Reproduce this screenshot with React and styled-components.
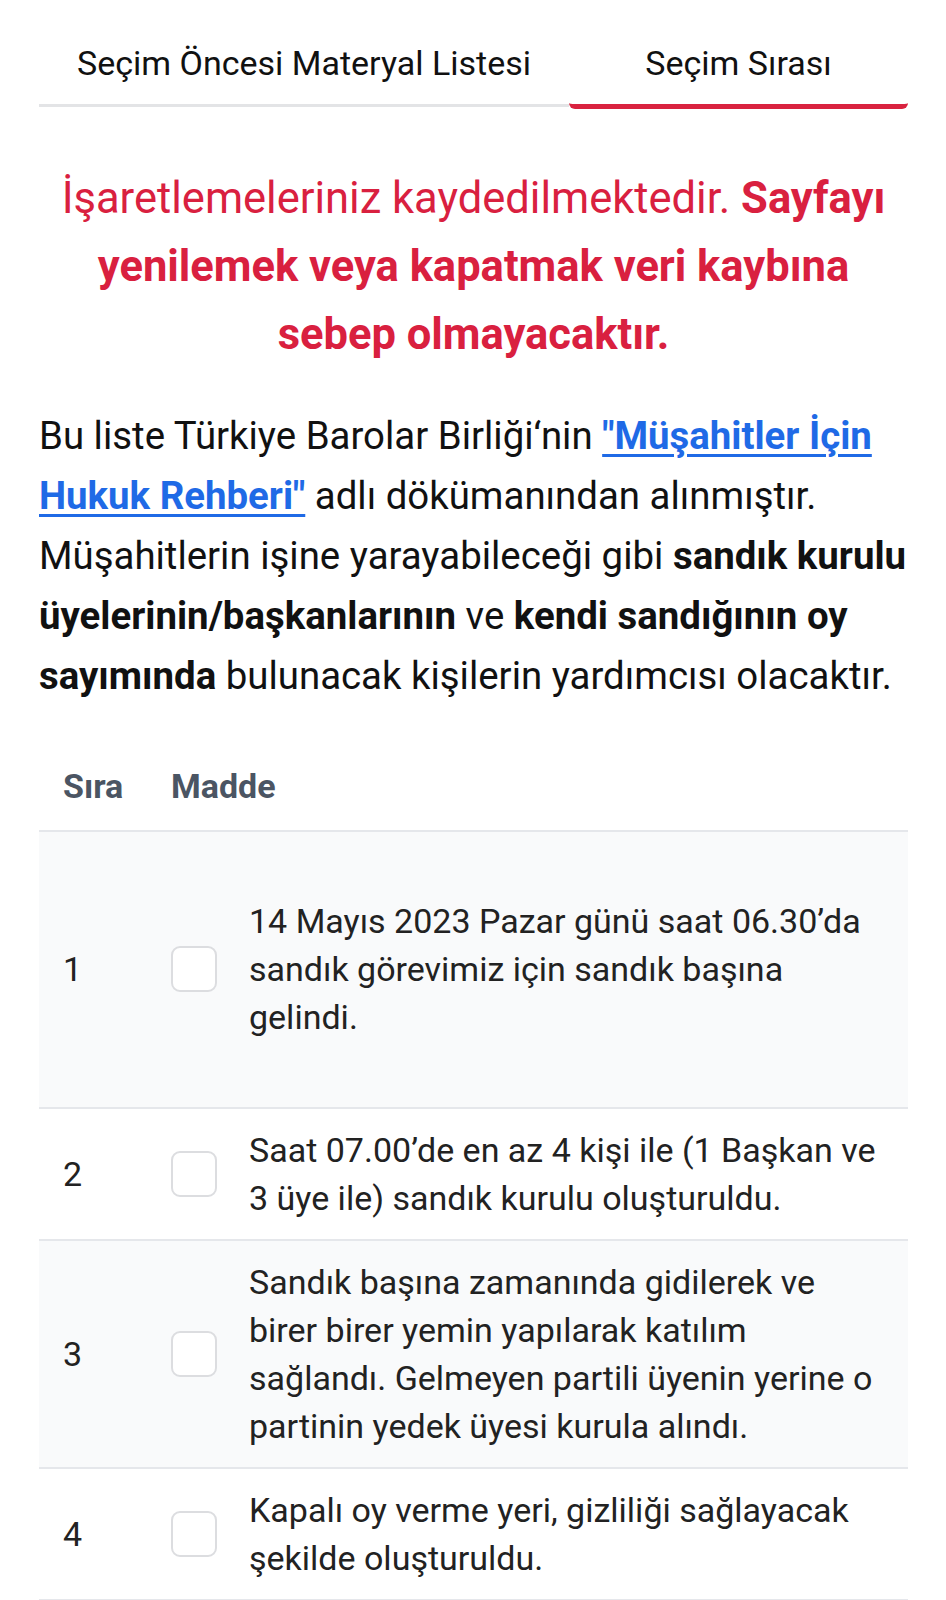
import styled, { createGlobalStyle } from 'styled-components';

const GlobalStyle = createGlobalStyle`
  body {
    margin: 0;
    background: #ffffff;
    font-family: Roboto, "Liberation Sans", sans-serif;
    color: #111111;
  }
`

const Page = styled.div`
  padding: 0 38px 0 39px;
`

const Tabs = styled.div`
  display: grid;
  grid-template-columns: 530px 1fr;
  padding-top: 39px;
`

const Tab = styled.div`
  text-align: center;
  font-size: 34px;
  line-height: 48px;
  padding-bottom: 17px;
  color: #111111;
  border-bottom: ${p => (p.active ? '5px solid #d9223f' : '3px solid #e3e4e6')};
  border-radius: ${p => (p.active ? '0 0 6px 6px' : '0')};
  margin-bottom: ${p => (p.active ? '-2px' : '0')};
`

const Alert = styled.p`
  margin: 58px 0 0;
  text-align: center;
  color: #d9203f;
  font-size: 43.5px;
  line-height: 68px;

  strong {
    font-weight: 700;
  }
`

const Intro = styled.p`
  margin: 37px -10px 0 0;
  font-size: 38.4px;
  line-height: 60px;
  color: #111111;

  a {
    color: #1f6ae6;
    font-weight: 700;
    text-decoration: underline;
    text-decoration-thickness: 3px;
    text-underline-offset: 5px;
  }
`

const Table = styled.div`
  margin-top: 40px;
`

const HeadRow = styled.div`
  display: grid;
  grid-template-columns: 108px 1fr;
  padding: 16px 24px 20px;
  border-bottom: 2px solid #e5e7eb;
  font-size: 34px;
  line-height: 48px;
  font-weight: 700;
  color: #4b5563;
`

const Row = styled.div`
  display: grid;
  grid-template-columns: 108px 46px 1fr;
  align-items: center;
  padding: ${p => (p.tall ? '65px' : '17px')} 24px ${p => (p.tall ? '66px' : '17px')} 24px;
  background: ${p => (p.shaded ? '#f9fafb' : '#ffffff')};
  border-bottom: 2px solid #e5e7eb;
`

const Num = styled.div`
  font-size: 34px;
  color: #222222;
`

const Check = styled.div`
  width: 46px;
  height: 46px;
  border: 2px solid #dcdde0;
  border-radius: 9px;
  background: #ffffff;
  box-sizing: border-box;
`

const Text = styled.div`
  padding-left: 32px;
  font-size: 34px;
  line-height: 48px;
  color: #222222;
`

const items = [
  '14 Mayıs 2023 Pazar günü saat 06.30’da sandık görevimiz için sandık başına gelindi.',
  'Saat 07.00’de en az 4 kişi ile (1 Başkan ve 3 üye ile) sandık kurulu oluşturuldu.',
  'Sandık başına zamanında gidilerek ve birer birer yemin yapılarak katılım sağlandı. Gelmeyen partili üyenin yerine o partinin yedek üyesi kurula alındı.',
  'Kapalı oy verme yeri, gizliliği sağlayacak şekilde oluşturuldu.'
]

function App() {
  return (
    <>
      <GlobalStyle />
      <Page>
        <Tabs>
          <Tab>Seçim Öncesi Materyal Listesi</Tab>
          <Tab active>Seçim Sırası</Tab>
        </Tabs>

        <Alert>
          İşaretlemeleriniz kaydedilmektedir. <strong>Sayfayı yenilemek veya kapatmak veri kaybına sebep olmayacaktır.</strong>
        </Alert>

        <Intro>
          Bu liste Türkiye Barolar Birliği‘nin <a href="#">"Müşahitler İçin Hukuk Rehberi"</a> adlı dökümanından alınmıştır.
          Müşahitlerin işine yarayabileceği gibi <b>sandık kurulu üyelerinin/başkanlarının</b> ve <b>kendi sandığının oy sayımında</b> bulunacak kişilerin yardımcısı olacaktır.
        </Intro>

        <Table>
          <HeadRow>
            <span>Sıra</span>
            <span>Madde</span>
          </HeadRow>
          {items.map((item, index) => (
            <Row key={index} shaded={index % 2 === 0} tall={index === 0}>
              <Num>{index + 1}</Num>
              <Check />
              <Text>{item}</Text>
            </Row>
          ))}
        </Table>
      </Page>
    </>
  )
}

export default App
